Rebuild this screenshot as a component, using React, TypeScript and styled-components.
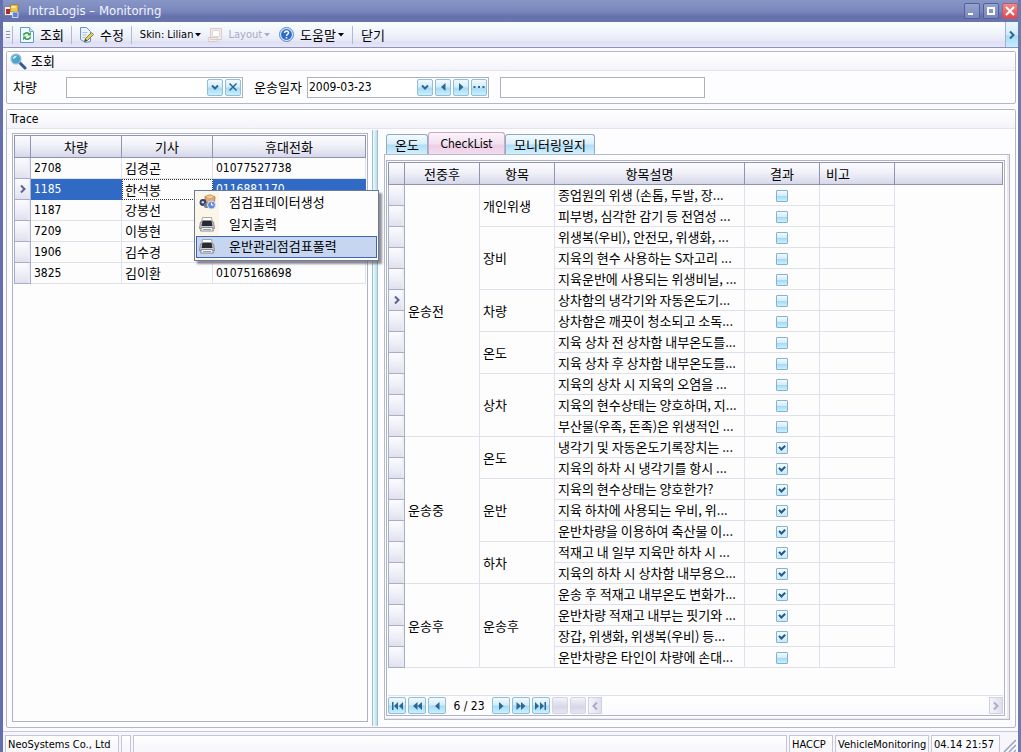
import React from "react";
import styled, { createGlobalStyle, css } from "styled-components";

const latin = '"DejaVu Sans Condensed", "Liberation Sans", "Noto Sans CJK KR", sans-serif';
const korean = '"Noto Sans CJK KR", "Liberation Sans", sans-serif';

const GlobalStyle = createGlobalStyle`
  * { box-sizing: border-box; }
  html, body { margin: 0; padding: 0; }
  body { font: 13px/20px ${korean}; color: #000; background: #fdfdff; overflow: hidden; }
  button, input { font: inherit; color: inherit; margin: 0; padding: 0; }
  svg { display: block; flex: none; }
`;

const Window = styled.div`
  display: flex;
  flex-direction: column;
  height: 100vh;
  overflow: hidden;
  border-left: 3px solid #6470ae;
  border-right: 3px solid #6c7ab0;
  background: #fbfbff;
`;

const TitleBar = styled.header`
  display: flex;
  align-items: center;
  flex: none;
  height: 22px;
  margin: 0 -3px;
  padding: 0 3px 0 4px;
  gap: 3px;
  background: linear-gradient(#8796c5, #7a87bd 50%, #6570ac 75%, #6a77ab);
`;

const Title = styled.h1`
  flex: 1;
  margin: 0 0 0 5px;
  font: 13px/20px ${latin};
  color: #f1f3ff;
`;

const CaptionButton = styled.button<{ $close?: boolean }>`
  display: grid;
  place-items: center;
  width: 16px;
  height: 16px;
  border: 1px solid ${(p) => (p.$close ? "#b85a78" : "#535f9d")};
  border-radius: 2px;
  background: ${(p) => (p.$close ? "linear-gradient(#f08a8c, #dc4a4f)" : "linear-gradient(#95a4ce, #7886bb)")};
`;

const ToolBar = styled.nav`
  display: flex;
  align-items: center;
  flex: none;
  height: 26px;
  padding-left: 3px;
  border-bottom: 1px solid #8f91ba;
  background: linear-gradient(#f9ffff, #eff2fb 50%, #e6e7f5 76%, #dedff2 80%, #e6e6f6);
`;

const Grip = styled.span`
  width: 4px;
  height: 7px;
  margin-right: 2px;
  background: repeating-linear-gradient(#8b93b0 0 1px, transparent 1px 3px);
`;

const Divider = styled.span<{ $first?: boolean }>`
  width: 1px;
  height: 18px;
  margin: 0 ${(p) => (p.$first ? 7 : 8)}px 0 ${(p) => (p.$first ? 0 : 7)}px;
  background: #b4b8ce;
`;

const ToolButton = styled.button<{ $latin?: boolean }>`
  display: flex;
  align-items: center;
  gap: 6px;
  height: 24px;
  border: 0;
  background: none;
  white-space: nowrap;
  font: ${(p) => (p.$latin ? "11px" : "13px")}/24px ${(p) => (p.$latin ? latin : korean)};
  &:disabled { color: #a9abbe; }
`;

const LayoutButton = styled(ToolButton)`
  margin: 0 8px 0 6px;
`;

const WithArrow = styled.span`
  display: flex;
  align-items: center;
  gap: 2px;
`;

const Overflow = styled.button`
  display: grid;
  place-items: center;
  width: 13px;
  height: 25px;
  margin-left: auto;
  border: 0;
  border-left: 1px solid #a7aecb;
  background: linear-gradient(#eaf7ff, #d2ecfc 50%, #a9dbf7 55%, #c6edfd);
`;

const Main = styled.main`
  display: flex;
  flex-direction: column;
  flex: 1;
  min-height: 0;
  padding: 3px 2px 3px 3px;
  gap: 5px;
  border-bottom: 1px solid #c6c9de;
`;

const Group = styled.section<{ $fill?: boolean }>`
  display: flex;
  flex-direction: column;
  flex: ${(p) => (p.$fill ? "1" : "none")};
  min-height: 0;
  border: 1px solid #b3b7cb;
  border-radius: 2px;
  background: #fdfdff;
`;

const GroupTitle = styled.h2<{ $latin?: boolean }>`
  display: flex;
  align-items: center;
  flex: none;
  gap: 4px;
  height: 19px;
  margin: 0;
  padding: 0 3px;
  border-bottom: 1px solid #e3e3f0;
  background: linear-gradient(#ffffff, #f8f8fd 60%, #f3f3fa);
  font: ${(p) => (p.$latin ? `12px/18px ${latin}` : `13px/18px ${korean}`)};
`;

const Filters = styled.div`
  display: flex;
  align-items: center;
  height: 32px;
  padding: 0 6px;
`;

const Label = styled.label`
  width: 53px;
  flex: none;
`;

const Field = styled.div<{ $width: number; $gap?: number }>`
  display: flex;
  align-items: center;
  flex: none;
  gap: 2px;
  width: ${(p) => p.$width}px;
  height: 21px;
  margin-right: ${(p) => p.$gap ?? 0}px;
  padding: 0 1px;
  border: 1px solid #adb1c6;
  background: #fff;
`;

const TextInput = styled.input`
  flex: 1;
  min-width: 0;
  height: 19px;
  border: 0;
  outline: 0;
  background: transparent;
  font: 12px/18px ${latin};
`;

const blueFace = css`
  border: 1px solid #8fbfd9;
  border-radius: 2px;
  background: linear-gradient(#f2faff, #d5edfb 45%, #a9daf5 55%, #c9f0ff);
`;

const SmallButton = styled.button`
  ${blueFace}
  display: grid;
  place-items: center;
  flex: none;
  width: 16px;
  height: 17px;
`;

const Split = styled.div`
  display: grid;
  grid-template-columns: 365px 6px minmax(0, 1fr);
  flex: 1;
  min-height: 0;
  padding: 1px 4px 1px 0;
`;

const GridBox = styled.div`
  display: flex;
  flex-direction: column;
  min-height: 0;
  border: 1px solid #adb2c8;
  background: #fdfdfd;
`;

const LeftPane = styled.div`
  display: flex;
  flex-direction: column;
  position: relative;
  min-height: 0;
  padding: 3px 4px 4px 5px;
  & > ${GridBox} { flex: 1; padding: 1px; }
`;

const Splitter = styled.div`
  border: solid #a5bccf;
  border-width: 0 1px;
  background: linear-gradient(90deg, #eefaff, #b7e0ef);
`;

const Table = styled.table`
  width: 100%;
  table-layout: fixed;
  border-collapse: separate;
  border-spacing: 0;
`;

const Th = styled.th<{ $left?: boolean }>`
  height: 23px;
  padding: 0 6px;
  border: solid #8f94b3;
  border-width: 1px 1px 1px 0;
  background: linear-gradient(#fbfbff, #f0f0f8 45%, #dedfee 85%, #d5d6e8);
  font-weight: 400;
  line-height: 18px;
  text-align: ${(p) => (p.$left ? "left" : "center")};
  &:first-child { border-left-width: 1px; }
`;

const Td = styled.td<{ $selected?: boolean; $focus?: boolean; $latin?: boolean; $center?: boolean }>`
  height: 21px;
  padding: 0 3px;
  border: solid #e0e1eb;
  border-width: 0 1px 1px 0;
  line-height: 18px;
  white-space: nowrap;
  overflow: hidden;
  text-align: ${(p) => (p.$center ? "center" : "left")};
  ${(p) => p.$latin && css`font: 12px/18px ${latin};`}
  ${(p) => p.$selected && css`background: #316ac5; border-color: #316ac5; color: #fff;`}
  ${(p) => p.$focus && css`border: 1px dotted #333; padding: 0 2px;`}
`;

const RowHead = styled.td`
  height: 21px;
  padding: 0 0 0 2px;
  border: solid #a9adc6;
  border-width: 0 1px 1px;
  background: linear-gradient(90deg, transparent 80%, #ececf5), linear-gradient(#fbfbff, #ededf6 60%, #dfe0ee);
`;

const Menu = styled.ul`
  position: absolute;
  top: 60px;
  left: 187px;
  width: 185px;
  margin: 0;
  padding: 1px 1px 2px;
  list-style: none;
  border: 1px solid #6c7a9c;
  background: linear-gradient(90deg, #fbf6e8 24px, #fdfdfd 24px);
  box-shadow: 3px 3px 2px rgba(70, 70, 80, 0.6);
`;

const MenuItem = styled.button<{ $active?: boolean }>`
  display: grid;
  grid-template-columns: 30px 1fr;
  align-items: center;
  width: 100%;
  height: 22px;
  padding: 0 0 2px 2px;
  border: 1px solid ${(p) => (p.$active ? "#3f66ae" : "transparent")};
  background: ${(p) => (p.$active ? "#c6d6f0" : "none")};
  line-height: 18px;
  text-align: left;
`;

const RightPane = styled.div`
  display: flex;
  flex-direction: column;
  min-height: 0;
  padding: 2px 1px 6px 8px;
`;

const Tabs = styled.div`
  display: flex;
  align-items: flex-end;
  flex: none;
  height: 22px;
`;

const Tab = styled.button<{ $active?: boolean; $width: number }>`
  width: ${(p) => p.$width}px;
  height: ${(p) => (p.$active ? 22 : 20)}px;
  border: 1px solid ${(p) => (p.$active ? "#c9a9c4" : "#93abc7")};
  border-bottom: 0;
  border-radius: 3px 3px 0 0;
  background: ${(p) =>
    p.$active
      ? "linear-gradient(#fbf3fa, #f2e1ef 50%, #ebcfe4 60%, #f3ddee)"
      : "linear-gradient(#f5fbff, #dbeffb 45%, #b4ddf5 55%, #cdf1ff)"};
  font: ${(p) => (p.$active ? `12px/18px ${latin}` : `13px/18px ${korean}`)};
`;

const TabPage = styled.div`
  display: flex;
  flex-direction: column;
  flex: 1;
  min-height: 0;
  margin-left: -2px;
  padding: 5px 4px 3px 1px;
  border: 1px solid #b5b9cd;
  box-shadow: inset -2px -1px #ece6ee;
  & > ${GridBox} { flex: 1; padding: 1px 1px 0; }
`;

const GridBody = styled.div`
  flex: 1;
  min-height: 0;
  overflow: hidden;
`;

const Check = styled.input`
  ${blueFace}
  appearance: none;
  display: block;
  width: 12px;
  height: 12px;
  margin: 1px auto 0;
  border-color: #83b4cf;
  border-radius: 1px;
  &:checked {
    background: url("data:image/svg+xml,%3Csvg xmlns='http://www.w3.org/2000/svg' viewBox='0 0 10 10'%3E%3Cpath d='M2 3.8 4.4 6.5 8.2 2.8' fill='none' stroke='%23255a86' stroke-width='2'/%3E%3C/svg%3E") center / 10px no-repeat,
      linear-gradient(#f2faff, #c9e9fb);
  }
`;

const Navigator = styled.div`
  display: flex;
  align-items: center;
  flex: none;
  gap: 2px;
  height: 20px;
  border-top: 1px solid #e2e2ee;
`;

const NavButton = styled.button`
  ${blueFace}
  display: grid;
  place-items: center;
  flex: none;
  width: 18px;
  height: 17px;
  &:disabled { width: 16px; border-color: #d4d4e6; background: linear-gradient(#f4f4fa, #d6d6e8 60%, #e6e6f2); }
`;

const Position = styled.span`
  width: 42px;
  font: 12px/18px ${latin};
  text-align: center;
  white-space: nowrap;
`;

const ScrollTrack = styled.div`
  display: flex;
  justify-content: space-between;
  align-items: center;
  flex: 1;
  height: 19px;
  background: linear-gradient(#ffffff, #fafafd);
`;

const ScrollButton = styled.button`
  display: grid;
  place-items: center;
  width: 14px;
  height: 17px;
  border: 1px solid #cfd0e3;
  background: linear-gradient(90deg, #f4f4fa, #dfdfed);
`;

const StatusBar = styled.footer`
  display: flex;
  flex: none;
  gap: 2px;
  height: 20px;
  padding: 3px 2px 0;
  overflow: hidden;
  background: #f6f6fc;
`;

const StatusCell = styled.span<{ $grow?: boolean; $width?: number }>`
  flex: ${(p) => (p.$grow ? "1" : "none")};
  width: ${(p) => (p.$width ? `${p.$width}px` : "auto")};
  height: 22px;
  padding: 0 2px;
  border: 1px solid #c3c5d8;
  background: linear-gradient(#ffffff, #f3f3fa);
  font: 11px/18px ${latin};
  white-space: nowrap;
`;

type Shape = "first" | "fastBack" | "back" | "next" | "fastNext" | "last" | "down" | "close" | "more" | "right" | "left";

const shapes: Record<Shape, React.ReactNode> = {
  first: <path d="M1 2h1.5v8H1zM7 2v8L3 6zM12 2v8L8 6z" />,
  fastBack: <path d="M6.5 2v8L2 6zM11 2v8L6.5 6z" />,
  back: <path d="M8.5 2v8L4 6z" />,
  next: <path d="M4 2v8l4.5-4z" />,
  fastNext: <path d="M1.5 2v8L6 6zM6 2v8l4.5-4z" />,
  last: <path d="M0 2v8l4-4zM5 2v8l4-4zM9.5 2H11v8H9.5z" />,
  down: <path d="M3 4.5 6 7.5l3-3" fill="none" strokeWidth="2" stroke="currentColor" />,
  close: <path d="m2.5 2.5 7 7m0-7-7 7" fill="none" strokeWidth="1.5" stroke="currentColor" />,
  more: <path d="M.5 5h2v2h-2zM5 5h2v2H5zM9.500 5h2v2h-2z" />,
  right: <path d="m4 2.5 3.500 3.500L4 9.500" fill="none" strokeWidth="2" stroke="currentColor" />,
  left: <path d="M8 2.5 4.500 6 8 9.500" fill="none" strokeWidth="2" stroke="currentColor" />,
};

const Glyph = ({ shape, color = "#2c6792" }: { shape: Shape; color?: string }) => (
  <svg width="12" height="12" viewBox="0 0 12 12" fill={color} color={color} aria-hidden="true">
    {shapes[shape]}
  </svg>
);

const Caret = () => (
  <svg width="7" height="4" viewBox="0 0 7 4" fill="currentColor" aria-hidden="true">
    <path d="M0 0h6L3 3.500z" />
  </svg>
);

const AppIcon = () => (
  <svg width="16" height="16" viewBox="0 0 16 16" aria-hidden="true">
    <path fill="#f0eeee" stroke="#6b5a60" strokeWidth=".6" d="M.5 3.500h8v9h-8z" />
    <path fill="#a52f35" d="M2 6h4v5H2z" />
    <path fill="#f6c63d" stroke="#8d6720" strokeWidth=".6" d="M6.500 1.800h7.500v7H6.500z" />
    <path fill="#fff0a8" d="M7.500 3h4v2h-4z" />
    <path fill="#5d82d2" stroke="#e7ecf9" strokeWidth=".8" d="M8.500 9h5.500v5.500H8.500z" />
  </svg>
);

const RefreshDoc = () => (
  <svg width="14" height="16" viewBox="0 0 14 16" aria-hidden="true">
    <path fill="#f1f8ff" stroke="#5c9cc7" d="M.5 .5h9l4 4v11H.5z" />
    <path fill="#c6dff2" stroke="#5c9cc7" strokeWidth=".8" d="M9.500.5v4h4" />
    <path fill="none" stroke="#36a048" strokeWidth="1.600" d="M3.500 8.500c.4-2.500 4-3.600 5.800-1.400M10.500 9.500c-.4 2.800-4 3.700-5.900 1.500" />
    <path fill="#36a048" d="M10.900 4.800v3.700H7.300zM3.100 13.300V9.600h3.600z" />
  </svg>
);

const EditDoc = () => (
  <svg width="14" height="16" viewBox="0 0 14 16" aria-hidden="true">
    <path fill="#eaf3fd" stroke="#6d93bd" d="M.5.500h6l4 4v10l-5 1-5-3z" />
    <path stroke="#a8c0d9" d="M2.500 5.500h5m-5 2.500h4m-4 2.500h3" />
    <path fill="#e8cf4f" stroke="#5f6a3a" strokeWidth=".8" d="m5.500 11.500 6-6 2 2-6 6-3 1.200z" />
    <path fill="#3d434d" d="m5.300 11.700 2 2-3 1z" />
  </svg>
);

const LayoutIcon = () => (
  <svg width="14" height="14" viewBox="0 0 14 14" aria-hidden="true">
    <path fill="#f4ece9" stroke="#d8cbcb" d="M2.500.5h11v11h-11zM.5 9.500h9v4h-9z" />
    <path fill="#fff" stroke="#dfd6d6" d="M4.500 2.500h7v6h-7z" />
  </svg>
);

const HelpIcon = () => (
  <svg width="15" height="15" viewBox="0 0 15 15" aria-hidden="true">
    <circle cx="7.500" cy="7.500" r="7" fill="#d9e8fa" stroke="#5b87c4" />
    <circle cx="7.500" cy="7.500" r="5.400" fill="#2c6acb" />
    <path fill="none" stroke="#fff" strokeWidth="1.500" d="M5.500 6c0-2.600 4.200-2.500 4 0-.1 1.300-2 1.300-2 3" />
    <path fill="#fff" d="M6.700 10h1.600v1.500H6.700z" />
  </svg>
);

const SearchIcon = () => (
  <svg width="17" height="17" viewBox="0 0 17 17" aria-hidden="true">
    <path stroke="#35588f" strokeWidth="3" strokeLinecap="round" d="m10 10 5 5" />
    <circle cx="6" cy="6" r="4.800" fill="#4aa5cf" stroke="#8fb9d2" strokeWidth="1.400" />
    <path fill="#d9f3fb" d="M3 6c0-2.500 2-3.600 4-3.200C6 4 5.500 5.500 3 6z" />
  </svg>
);

const DataIcon = () => (
  <svg width="18" height="16" viewBox="0 0 18 16" aria-hidden="true">
    <path fill="#e0a770" stroke="#9b6b4a" strokeWidth=".7" d="M6 2.500 11 .8l5 2-.5 5.700-5 1.200L6 8z" />
    <path fill="#f4cfa0" d="m6.500 2.700 4.500-1.500 4 1.600-4 1.400z" />
    <circle cx="4" cy="8.500" r="3.400" fill="#32406e" />
    <circle cx="3.800" cy="8.300" r="1.300" fill="#c6d3ee" />
    <circle cx="7.500" cy="11.500" r="2.600" fill="#7c8195" />
    <circle cx="12.500" cy="11" r="4" fill="#5f87d6" stroke="#dce6fa" />
    <path fill="none" stroke="#fff" strokeWidth="1.200" d="M12.500 8.500V11h2" />
  </svg>
);

const PrinterIcon = () => (
  <svg width="16" height="15" viewBox="0 0 16 15" aria-hidden="true">
    <path fill="#fff" stroke="#8b8f98" strokeWidth=".8" d="M3.500.5h9l1 5h-11z" />
    <path fill="#c8cbd2" stroke="#777b85" strokeWidth=".8" d="M1.500 5h13l1 6.500H.5z" />
    <path fill="#262b34" d="M3.500 3.500h9l1 5.500h-11z" />
    <path fill="#f1f2f5" stroke="#73777f" strokeWidth=".8" d="M2.500 10.500h11l1 3.500h-13z" />
    <path fill="#9a9ea8" d="M4 12h8v1H4z" />
  </svg>
);

const vehicles = [
  ["2708", "김경곤", "01077527738"],
  ["1185", "한석봉", "0116881170"],
  ["1187", "강봉선", ""],
  ["7209", "이봉현", ""],
  ["1906", "김수경", ""],
  ["3825", "김이환", "01075168698"],
];

type Row = { phase?: [string, number]; item?: [string, number]; text: string; done?: boolean };

const checklist: Row[] = [
  { phase: ["운송전", 12], item: ["개인위생", 2], text: "종업원의 위생 (손톱, 두발, 장..." },
  { text: "피부병, 심각한 감기 등 전염성 ..." },
  { item: ["장비", 3], text: "위생복(우비), 안전모, 위생화, ..." },
  { text: "지육의 현수 사용하는 S자고리 ..." },
  { text: "지육운반에 사용되는 위생비닐, ..." },
  { item: ["차량", 2], text: "상차함의 냉각기와 자동온도기..." },
  { text: "상차함은 깨끗이 청소되고 소독..." },
  { item: ["온도", 2], text: "지육 상차 전 상차함 내부온도를..." },
  { text: "지육 상차 후 상차함 내부온도를..." },
  { item: ["상차", 3], text: "지육의 상차 시 지육의 오염을 ..." },
  { text: "지육의 현수상태는 양호하며, 지..." },
  { text: "부산물(우족, 돈족)은 위생적인 ..." },
  { phase: ["운송중", 7], item: ["온도", 2], text: "냉각기 및 자동온도기록장치는 ...", done: true },
  { text: "지육의 하차 시 냉각기를 항시 ...", done: true },
  { item: ["운반", 3], text: "지육의 현수상태는 양호한가?", done: true },
  { text: "지육 하차에 사용되는 우비, 위...", done: true },
  { text: "운반차량을 이용하여 축산물 이...", done: true },
  { item: ["하차", 2], text: "적재고 내 일부 지육만 하차 시 ...", done: true },
  { text: "지육의 하차 시 상차함 내부용으...", done: true },
  { phase: ["운송후", 4], item: ["운송후", 4], text: "운송 후 적재고 내부온도 변화가...", done: true },
  { text: "운반차량 적재고 내부는 핏기와 ...", done: true },
  { text: "장갑, 위생화, 위생복(우비) 등...", done: true },
  { text: "운반차량은 타인이 차량에 손대..." },
];

const VehicleTable = () => (
  <Table>
    <colgroup>
      <col style={{ width: 17 }} />
      <col style={{ width: 91 }} />
      <col style={{ width: 91 }} />
      <col />
    </colgroup>
    <thead>
      <tr>
        <Th />
        <Th>차량</Th>
        <Th>기사</Th>
        <Th>휴대전화</Th>
      </tr>
    </thead>
    <tbody>
      {vehicles.map(([car, driver, phone], i) => (
        <tr key={car}>
          <RowHead>{i === 1 && <Glyph shape="right" color="#5d6391" />}</RowHead>
          <Td $latin $selected={i === 1}>{car}</Td>
          <Td $focus={i === 1}>{driver}</Td>
          <Td $latin $selected={i === 1}>{phone}</Td>
        </tr>
      ))}
    </tbody>
  </Table>
);

const CheckTable = () => (
  <Table>
    <colgroup>
      <col style={{ width: 17 }} />
      <col style={{ width: 75 }} />
      <col style={{ width: 75 }} />
      <col style={{ width: 190 }} />
      <col style={{ width: 75 }} />
      <col style={{ width: 75 }} />
      <col />
    </colgroup>
    <thead>
      <tr>
        <Th />
        <Th>전중후</Th>
        <Th>항목</Th>
        <Th>항목설명</Th>
        <Th>결과</Th>
        <Th $left>비고</Th>
        <Th />
      </tr>
    </thead>
    <tbody>
      {checklist.map((row, i) => (
        <tr key={i}>
          <RowHead>{i === 5 && <Glyph shape="right" color="#5d6391" />}</RowHead>
          {row.phase && <Td rowSpan={row.phase[1]}>{row.phase[0]}</Td>}
          {row.item && <Td rowSpan={row.item[1]}>{row.item[0]}</Td>}
          <Td>{row.text}</Td>
          <Td $center>
            <Check type="checkbox" defaultChecked={row.done} aria-label={row.text} />
          </Td>
          <Td />
        </tr>
      ))}
    </tbody>
  </Table>
);

export default function App() {
  return (
    <>
      <GlobalStyle />
      <Window>
        <TitleBar>
          <AppIcon />
          <Title>IntraLogis – Monitoring</Title>
          <CaptionButton aria-label="Minimize">
            <svg width="10" height="10"><path fill="#fff" d="M1 7h5v2H1z" /></svg>
          </CaptionButton>
          <CaptionButton aria-label="Maximize">
            <svg width="10" height="10"><path fill="none" stroke="#fff" strokeWidth="2" d="M2 2h6v6H2z" /></svg>
          </CaptionButton>
          <CaptionButton $close aria-label="Close">
            <svg width="10" height="10"><path stroke="#fff" strokeWidth="2" d="m1 1 8 8m0-8-8 8" /></svg>
          </CaptionButton>
        </TitleBar>

        <ToolBar>
          <Grip />
          <Divider $first />
          <ToolButton><RefreshDoc />조회</ToolButton>
          <Divider />
          <ToolButton><EditDoc />수정</ToolButton>
          <Divider />
          <ToolButton $latin><WithArrow>Skin: Lilian<Caret /></WithArrow></ToolButton>
          <LayoutButton $latin disabled><LayoutIcon /><WithArrow>Layout<Caret /></WithArrow></LayoutButton>
          <ToolButton><HelpIcon /><WithArrow>도움말<Caret /></WithArrow></ToolButton>
          <Divider />
          <ToolButton>닫기</ToolButton>
          <Overflow aria-label="More"><Glyph shape="right" /></Overflow>
        </ToolBar>

        <Main>
          <Group>
            <GroupTitle><SearchIcon />조회</GroupTitle>
            <Filters>
              <Label htmlFor="car">차량</Label>
              <Field $width={177} $gap={11}>
                <TextInput id="car" />
                <SmallButton aria-label="Open"><Glyph shape="down" /></SmallButton>
                <SmallButton aria-label="Clear"><Glyph shape="close" /></SmallButton>
              </Field>
              <Label htmlFor="date">운송일자</Label>
              <Field $width={182} $gap={11}>
                <TextInput id="date" defaultValue="2009-03-23" />
                <SmallButton aria-label="Open"><Glyph shape="down" /></SmallButton>
                <SmallButton aria-label="Previous"><Glyph shape="back" /></SmallButton>
                <SmallButton aria-label="Next"><Glyph shape="next" /></SmallButton>
                <SmallButton aria-label="More"><Glyph shape="more" /></SmallButton>
              </Field>
              <Field $width={205}><TextInput aria-label="Memo" /></Field>
            </Filters>
          </Group>

          <Group $fill>
            <GroupTitle $latin>Trace</GroupTitle>
            <Split>
              <LeftPane>
                <GridBox><VehicleTable /></GridBox>
                <Menu role="menu">
                  <li><MenuItem role="menuitem"><DataIcon />점검표데이터생성</MenuItem></li>
                  <li><MenuItem role="menuitem"><PrinterIcon />일지출력</MenuItem></li>
                  <li><MenuItem role="menuitem" $active><PrinterIcon />운반관리점검표풀력</MenuItem></li>
                </Menu>
              </LeftPane>
              <Splitter />
              <RightPane>
                <Tabs role="tablist">
                  <Tab role="tab" $width={42}>온도</Tab>
                  <Tab role="tab" $active $width={77}>CheckList</Tab>
                  <Tab role="tab" $width={90}>모니터링일지</Tab>
                </Tabs>
                <TabPage>
                  <GridBox>
                    <GridBody><CheckTable /></GridBody>
                    <Navigator>
                      <NavButton aria-label="First"><Glyph shape="first" /></NavButton>
                      <NavButton aria-label="Previous page"><Glyph shape="fastBack" /></NavButton>
                      <NavButton aria-label="Previous"><Glyph shape="back" /></NavButton>
                      <Position>6 / 23</Position>
                      <NavButton aria-label="Next"><Glyph shape="next" /></NavButton>
                      <NavButton aria-label="Next page"><Glyph shape="fastNext" /></NavButton>
                      <NavButton aria-label="Last"><Glyph shape="last" /></NavButton>
                      <NavButton disabled aria-label="Append" />
                      <NavButton disabled aria-label="Delete" />
                      <ScrollTrack>
                        <ScrollButton aria-label="Scroll left"><Glyph shape="left" color="#aaaccd" /></ScrollButton>
                        <ScrollButton aria-label="Scroll right"><Glyph shape="right" color="#aaaccd" /></ScrollButton>
                      </ScrollTrack>
                    </Navigator>
                  </GridBox>
                </TabPage>
              </RightPane>
            </Split>
          </Group>
        </Main>

        <StatusBar>
          <StatusCell $width={114}>NeoSystems Co., Ltd</StatusCell>
          <StatusCell $width={10} />
          <StatusCell $grow />
          <StatusCell $width={44}>HACCP</StatusCell>
          <StatusCell $width={94}>VehicleMonitoring</StatusCell>
          <StatusCell $width={69}>04.14 21:57</StatusCell>
          <svg width="14" height="18" viewBox="0 0 14 18" aria-hidden="true">
            <path stroke="#9aa0bd" strokeWidth="1.500" d="M2 17 14 5M7 17l7-7M12 17l2-2" />
          </svg>
        </StatusBar>
      </Window>
    </>
  );
}
